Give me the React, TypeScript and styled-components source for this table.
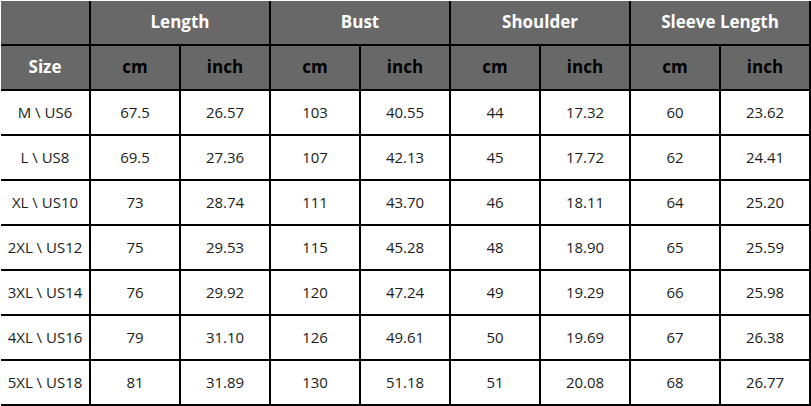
import styled, { createGlobalStyle } from 'styled-components'

const GlobalStyle = createGlobalStyle`
  html, body {
    margin: 0;
    padding: 0;
    background: #fff;
  }
  body {
    font-family: "Open Sans", "Liberation Sans", sans-serif;
  }
`

const Table = styled.div`
  display: grid;
  grid-template-columns: repeat(9, 90px);
  grid-auto-rows: 45px;
  padding: 1px 0 0 1px;
  width: 811px;
  box-sizing: border-box;
`

interface CellProps {
  span?: number
}

const Cell = styled.div<CellProps>`
  grid-column: span ${({ span }) => span || 1};
  display: flex;
  align-items: center;
  justify-content: center;
  border-right: 2px solid #000;
  border-bottom: 2px solid #000;
  box-sizing: border-box;
  padding-bottom: 2px;
`

const HeadCell = styled(Cell)<{ dark?: boolean }>`
  background: #686868;
  color: ${({ dark }) => (dark ? '#000' : '#fff')};
  font-weight: 700;
  font-size: 17px;
`

const BodyCell = styled(Cell)`
  background: #fff;
  color: #1c1c1c;
  font-size: 15px;
`

const groups = ['Length', 'Bust', 'Shoulder', 'Sleeve Length']

const rows = [
  ['M \\ US6', '67.5', '26.57', '103', '40.55', '44', '17.32', '60', '23.62'],
  ['L \\ US8', '69.5', '27.36', '107', '42.13', '45', '17.72', '62', '24.41'],
  ['XL \\ US10', '73', '28.74', '111', '43.70', '46', '18.11', '64', '25.20'],
  ['2XL \\ US12', '75', '29.53', '115', '45.28', '48', '18.90', '65', '25.59'],
  ['3XL \\ US14', '76', '29.92', '120', '47.24', '49', '19.29', '66', '25.98'],
  ['4XL \\ US16', '79', '31.10', '126', '49.61', '50', '19.69', '67', '26.38'],
  ['5XL \\ US18', '81', '31.89', '130', '51.18', '51', '20.08', '68', '26.77'],
]

export default function App() {
  return (
    <>
      <GlobalStyle />
      <Table>
        <HeadCell />
        {groups.map((g) => (
          <HeadCell key={g} span={2}>{g}</HeadCell>
        ))}
        <HeadCell>Size</HeadCell>
        {groups.map((g) => [
          <HeadCell key={g + 'cm'} dark>cm</HeadCell>,
          <HeadCell key={g + 'in'} dark>inch</HeadCell>,
        ])}
        {rows.map((row) =>
          row.map((v, i) => <BodyCell key={row[0] + i}>{v}</BodyCell>)
        )}
      </Table>
    </>
  )
}
